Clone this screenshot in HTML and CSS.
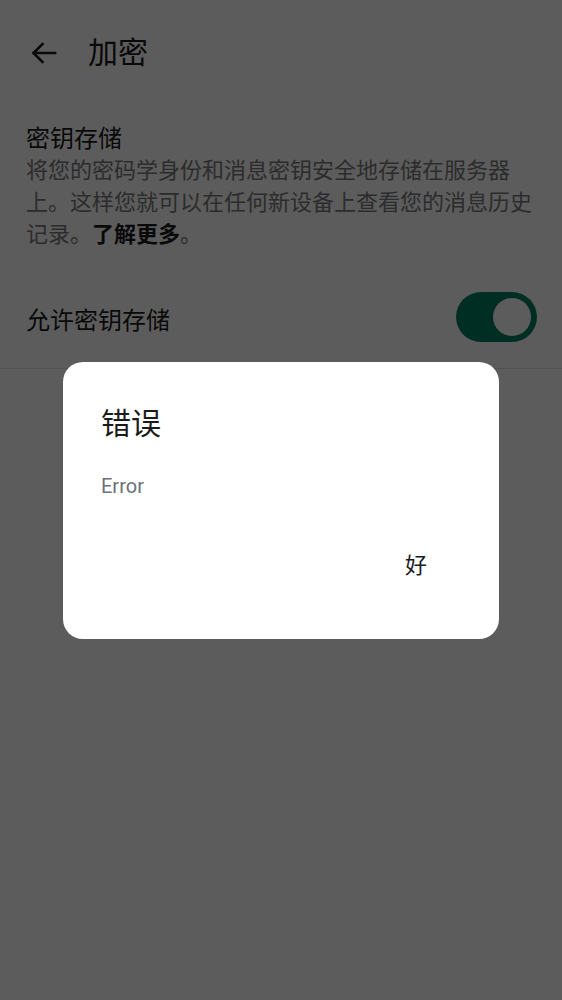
FILE: index.html
```html
<!DOCTYPE html>
<html lang="zh-CN">
<head>
<meta charset="utf-8">
<link rel="stylesheet" href="styles.css">
</head>
<body>
<div class="page">
  <header class="topbar">
    <svg class="back" width="26" height="22" viewBox="0 0 26 22" aria-hidden="true">
      <path d="M24 11H2.5 M11.5 2 L2.5 11 L11.5 20" fill="none" stroke="#1b1b1b" stroke-width="2.6" stroke-linecap="square" stroke-linejoin="miter"/>
    </svg>
    <h1 class="title">加密</h1>
  </header>
  <section class="section">
    <div class="section-title">密钥存储</div>
    <p class="desc">将您的密码学身份和消息密钥安全地存储在服务器上。这样您就可以在任何新设备上查看您的消息历史记录。<b class="more">了解更多</b>。</p>
  </section>
  <div class="row">
    <span class="row-label">允许密钥存储</span>
    <span class="switch"><span class="thumb"></span></span>
  </div>
</div>
<div class="scrim">
  <div class="dialog">
    <div class="dialog-title">错误</div>
    <div class="dialog-text">Error</div>
    <div class="actions">
      <span class="btn">好</span>
    </div>
  </div>
</div>
</body>
</html>
```
FILE: styles.css
```css
* { box-sizing: border-box; }
html, body {
  margin: 0;
  padding: 0;
  background: #ffffff;
  font-family: Roboto, "Noto Sans CJK SC", sans-serif;
  color: #1b1b1b;
}
.page {
  width: 562px;
  height: 1000px;
  background: #ffffff;
}
.topbar {
  height: 106px;
  display: flex;
  align-items: center;
  padding-left: 31px;
  gap: 31px;
}
.back { display: block; }
.title {
  margin: 0;
  font-size: 30px;
  font-weight: 400;
  line-height: 40px;
  color: #1b1b1b;
}
.section {
  padding: 17px 26px 0 26px;
}
.section-title {
  font-size: 24px;
  line-height: 32px;
  color: #1b1b1b;
}
.desc {
  margin: 0;
  font-size: 22px;
  line-height: 32px;
  color: #7a7a7a;
}
.more {
  font-weight: 700;
  color: #1b1b1b;
}
.row {
  margin-top: 15px;
  height: 103px;
  display: flex;
  align-items: center;
  justify-content: space-between;
  padding: 0 25px 0 26px;
  border-bottom: 1px solid #e4e4e4;
}
.row-label {
  font-size: 24px;
  line-height: 32px;
  color: #1b1b1b;
  padding-top: 8px;
}
.switch {
  width: 81px;
  height: 50px;
  border-radius: 25px;
  background: #008060;
  display: flex;
  align-items: center;
  justify-content: flex-end;
  padding-right: 6px;
}
.thumb {
  width: 38px;
  height: 38px;
  border-radius: 50%;
  background: #ffffff;
}
.scrim {
  position: fixed;
  inset: 0;
  background: rgba(0, 0, 0, 0.639);
  display: flex;
  align-items: center;
  justify-content: center;
}
.dialog {
  width: 436px;
  height: 277px;
  background: #ffffff;
  border-radius: 20px;
  padding: 42px 24px 0 38px;
  display: flex;
  flex-direction: column;
}
.dialog-title {
  font-size: 30px;
  line-height: 40px;
  color: #1b1b1b;
}
.dialog-text {
  margin-top: 28px;
  font-size: 20px;
  line-height: 28px;
  color: #6c7078;
}
.actions {
  margin-top: 39px;
  display: flex;
  justify-content: flex-end;
  padding-right: 32px;
}
.btn {
  height: 48px;
  display: flex;
  align-items: center;
  padding: 0 16px;
  font-size: 22px;
  color: #1b1b1b;
}
```
